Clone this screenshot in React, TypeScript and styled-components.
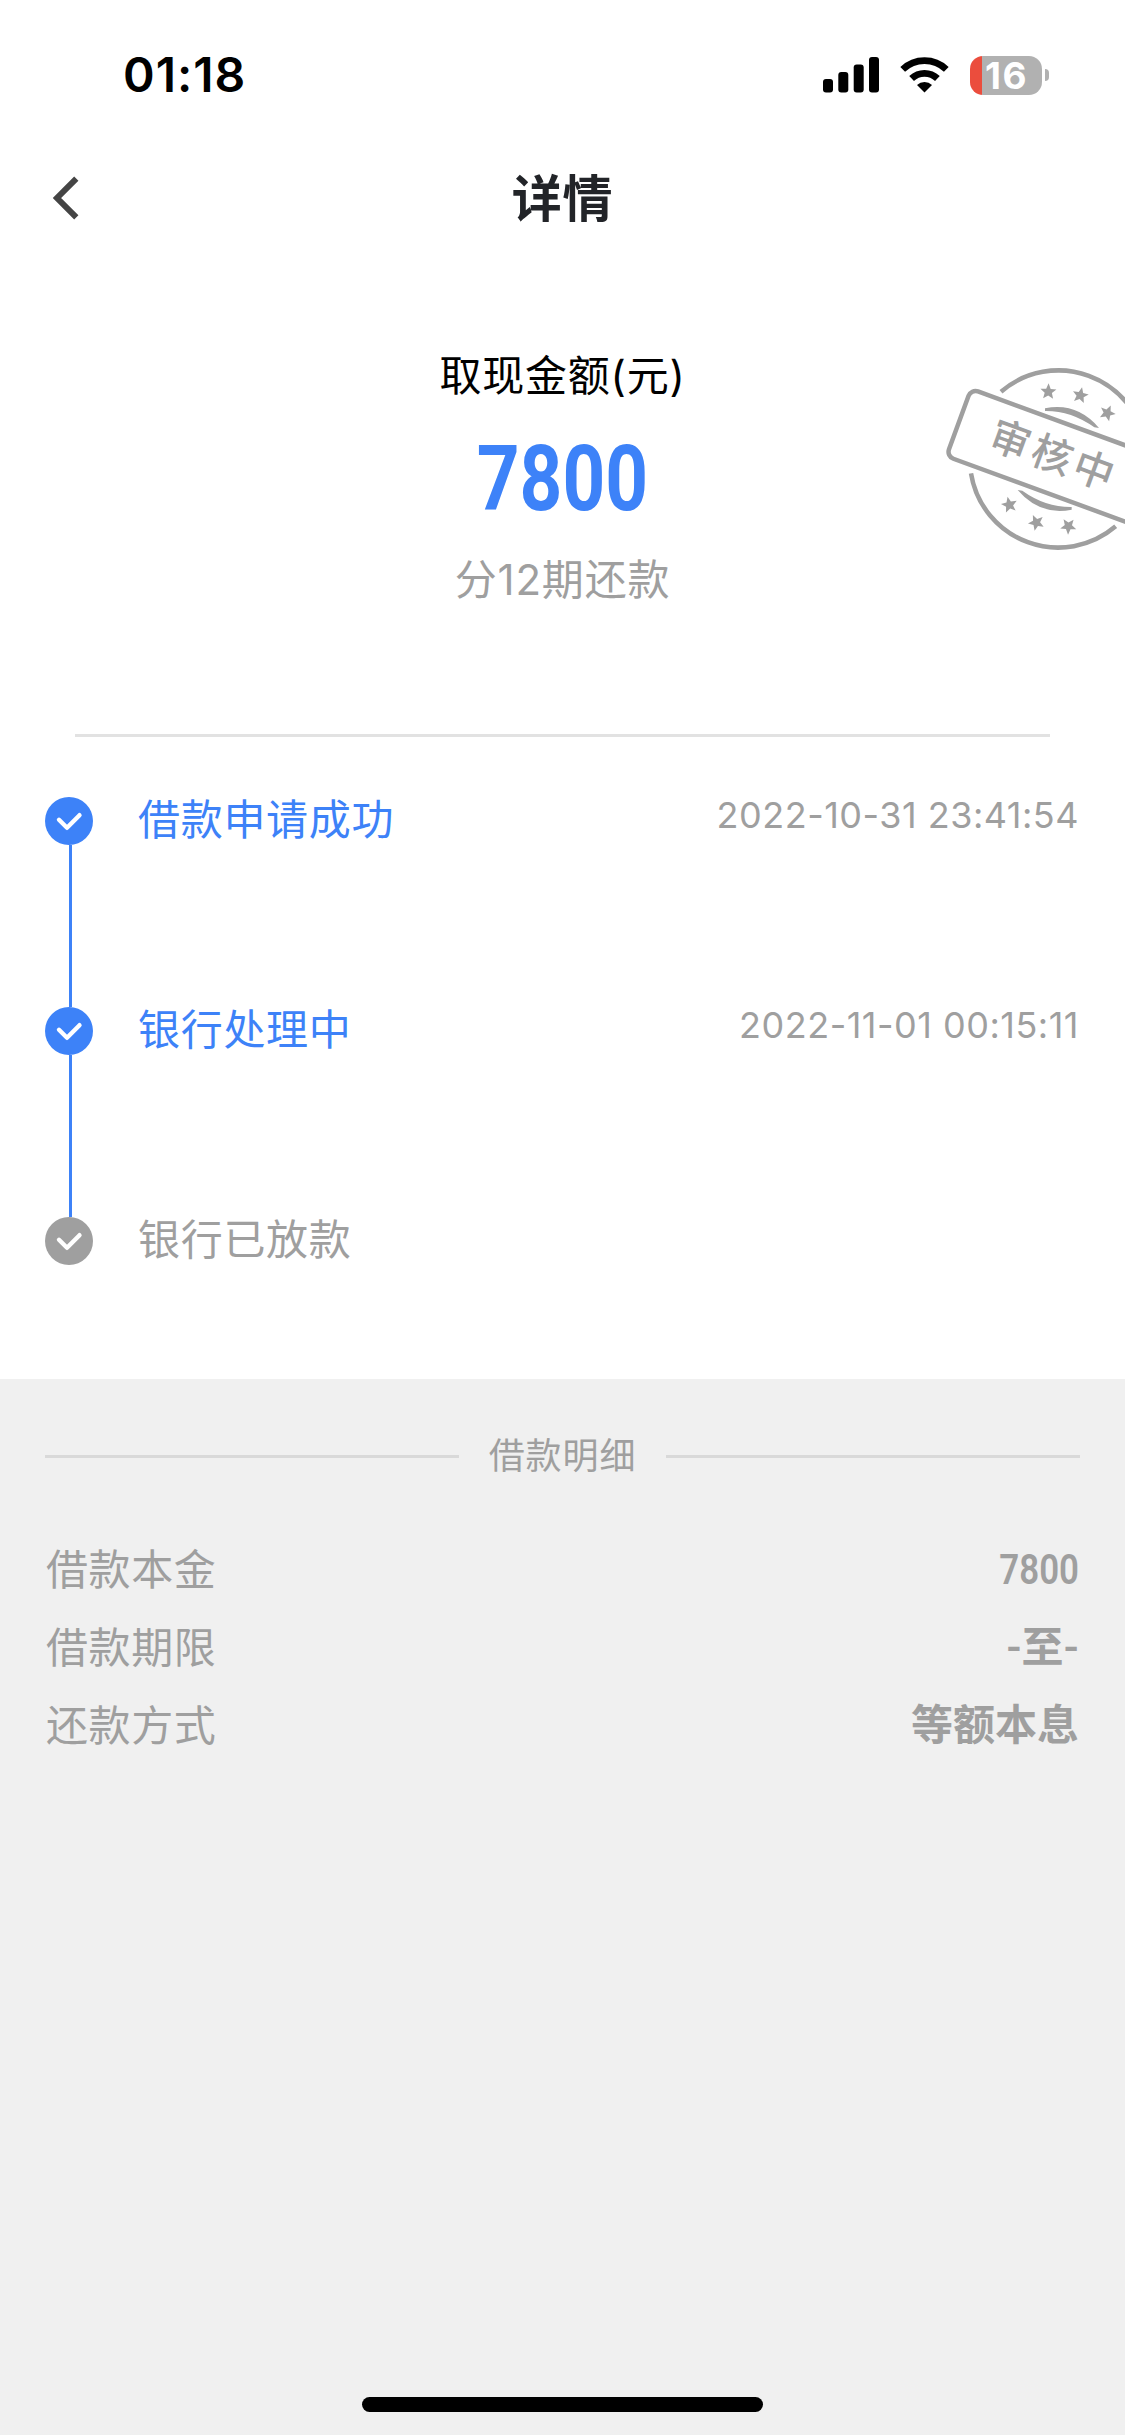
import React from "react";
import styled, { createGlobalStyle } from "styled-components";

const BLUE = "#3d82f8";
const GREY = "#9f9f9f";

const GlobalStyle = createGlobalStyle`
  * { box-sizing: border-box; }
  body {
    margin: 0;
    background: #f0f0f0;
    font-family: Inter, "Noto Sans CJK SC", sans-serif;
  }
`;

const Page = styled.div`
  display: flex;
  flex-direction: column;
  width: 1125px;
  height: 2435px;
  overflow: hidden;
  background: #f0f0f0;
`;

const Sheet = styled.main`
  display: flex;
  flex-direction: column;
  height: 1379px;
  flex: none;
  background: #fff;

  > * {
    flex: none;
  }
`;

const StatusBar = styled.header`
  display: flex;
  align-items: center;
  justify-content: space-between;
  height: 150px;
  padding: 0 76px 0 123px;
`;

const Clock = styled.time`
  font-size: 48px;
  font-weight: 600;
  line-height: 60px;
  letter-spacing: 1px;
  color: #000;
`;

const StatusIcons = styled.div`
  display: flex;
  align-items: center;
  gap: 21px;
`;

const Battery = styled.div`
  display: flex;
  align-items: center;
  gap: 3px;
`;

const BatteryBody = styled.div`
  display: flex;
  align-items: center;
  justify-content: center;
  width: 72px;
  height: 39px;
  padding-left: 1px;
  border-radius: 13px;
  background: linear-gradient(90deg, #eb4d3d 12px, #b1b1b1 12px);
  color: #fff;
  font-size: 37px;
  font-weight: 700;
  line-height: 39px;
  letter-spacing: 1.5px;
`;

const BatteryCap = styled.div`
  width: 4px;
  height: 12px;
  border-radius: 0 4px 4px 0;
  background: #b1b1b1;
`;

const NavBar = styled.nav`
  display: grid;
  grid-template-columns: 100px 1fr 100px;
  align-items: center;
  height: 96px;
`;

const BackButton = styled.button`
  display: flex;
  padding: 0 0 0 52px;
  border: 0;
  background: none;
`;

const Title = styled.h1`
  margin: 0;
  padding-top: 2px;
  text-align: center;
  font-size: 50px;
  font-weight: 600;
  line-height: 72px;
  letter-spacing: 0.8px;
  color: #222428;
`;

const Summary = styled.section`
  display: flex;
  flex-direction: column;
  align-items: center;
  position: relative;
  height: 488px;
  padding-top: 100px;
`;

const Caption = styled.div<{ $color: string }>`
  font-size: 42px;
  line-height: 60px;
  letter-spacing: 0.8px;
  color: ${(p) => p.$color};
`;

const Amount = styled.div`
  margin: 23px 0 21px;
  font-family: Roboto, sans-serif;
  font-size: 91px;
  font-weight: 700;
  line-height: 100px;
  transform: scaleX(0.82);
  color: ${BLUE};
`;

const Stamp = styled.svg`
  position: absolute;
  top: 94px;
  right: 0;
`;

const Divider = styled.hr`
  width: 975px;
  height: 3px;
  margin: 0 auto;
  border: 0;
  background: #e2e2e2;
`;

const Timeline = styled.ol`
  display: flex;
  flex-direction: column;
  margin: 0;
  padding: 60px 46px 0 45px;
  list-style: none;
`;

const Step = styled.li`
  display: grid;
  grid-template-columns: 48px 1fr auto;
  column-gap: 45px;
  height: 210px;

  &:last-child {
    height: 48px;
  }
`;

const Rail = styled.div`
  display: flex;
  flex-direction: column;
  align-items: center;
`;

const Connector = styled.div`
  width: 3px;
  flex: 1;
  margin-left: 3px;
  background: ${BLUE};
`;

const StepName = styled.div<{ $color: string }>`
  font-size: 42px;
  line-height: 46px;
  letter-spacing: 0.7px;
  color: ${(p) => p.$color};
`;

const StepTime = styled.time`
  font-size: 36px;
  line-height: 36px;
  letter-spacing: 0.5px;
  color: ${GREY};
`;

const Details = styled.section`
  display: flex;
  flex-direction: column;
  flex: 1;
  padding: 47px 45px 0;
  color: ${GREY};
`;

const DetailsHeading = styled.h2`
  display: flex;
  align-items: center;
  gap: 30px;
  margin: 0 0 45px;
  font-size: 36px;
  font-weight: 400;
  line-height: 60px;
  letter-spacing: 0.9px;

  &::before,
  &::after {
    content: "";
    flex: 1;
    height: 3px;
    background: #d9d9d9;
  }
`;

const DetailRow = styled.div`
  display: flex;
  align-items: center;
  justify-content: space-between;
  height: 78px;
  padding: 0 1px;
  font-size: 42px;
  line-height: 78px;
`;

const DetailLabel = styled.span`
  letter-spacing: 0.6px;
`;

const DetailValue = styled.span`
  font-family: Roboto, "Noto Sans CJK SC", sans-serif;
  font-weight: 600;
`;

const DetailNumber = styled.span`
  font-family: Roboto, sans-serif;
  font-weight: 600;
  transform: scaleX(0.83);
  transform-origin: right center;
`;

const HomeIndicator = styled.footer`
  width: 401px;
  height: 15px;
  margin: 0 auto 23px;
  border-radius: 8px;
  background: #000;
`;

const SignalIcon = () => (
  <svg width="56" height="36" viewBox="0 0 56 36">
    <rect x="0" y="22" width="10" height="13.5" rx="3" />
    <rect x="15.3" y="15" width="10" height="20.5" rx="3" />
    <rect x="30.7" y="7.5" width="10" height="28" rx="3" />
    <rect x="46" y="0" width="10" height="35.5" rx="3" />
  </svg>
);

const WifiIcon = () => (
  <svg width="49" height="36" viewBox="0 0 49 36">
    <path d="M24.5 35.5 L17 28 A10.8 10.8 0 0 1 32 28 Z" />
    <path d="M11.6 21.5 A18.6 18.6 0 0 1 37.4 21.5" fill="none" stroke="#000" strokeWidth="6.8" />
    <path d="M2.7 12.4 A31.5 31.5 0 0 1 46.3 12.4" fill="none" stroke="#000" strokeWidth="6.8" />
  </svg>
);

const BackIcon = () => (
  <svg width="28" height="44" viewBox="0 0 28 44">
    <path d="M24.3 2.7 L5 22 L24.3 41.3" fill="none" stroke="#444" strokeWidth="6" />
  </svg>
);

const CheckIcon = ({ color }: { color: string }) => (
  <svg width="48" height="48" viewBox="0 0 48 48">
    <circle cx="24" cy="24" r="24" fill={color} />
    <path
      d="M14 22.8 L22 30.8 L34.5 18.2"
      fill="none"
      stroke="#fff"
      strokeWidth="4.4"
      strokeLinecap="round"
      strokeLinejoin="round"
    />
  </svg>
);

const STAR = "M0-25 L6.8-8.6 L24-7.7 L10.8 3.4 L15 20.6 L0 11.4 L-15 20.6 L-10.8 3.4 L-24-7.7 L-6.8-8.6Z";

const StampHalf = () => (
  <>
    <path d="M258 155 A265 265 0 0 1 692 314" fill="none" stroke={GREY} strokeWidth="13.5" />
    <path d="M390 205 Q486 186 552 264 L538 262 Q468 212 390 213Z" fill={GREY} />
    <path d={STAR} transform="translate(400 155) rotate(2)" fill={GREY} />
    <path d={STAR} transform="translate(496 166) rotate(12)" fill={GREY} />
    <path d={STAR} transform="translate(577 219) rotate(24)" fill={GREY} />
  </>
);

const ReviewStamp = () => (
  <Stamp width="210" height="230" viewBox="0 0 630 690">
    <StampHalf />
    <g transform="rotate(180 430 357)">
      <StampHalf />
    </g>
    <g transform="rotate(20.1 430 357)">
      <rect x="112" y="249.5" width="636" height="215" rx="22" fill="#fff" stroke={GREY} strokeWidth="13.5" />
      <text x="215" y="396" fontSize="121" fontWeight="500" letterSpacing="12" fill={GREY}>
        审核中
      </text>
    </g>
  </Stamp>
);

const steps = [
  { name: "借款申请成功", time: "2022-10-31 23:41:54", done: true },
  { name: "银行处理中", time: "2022-11-01 00:15:11", done: true },
  { name: "银行已放款", time: "", done: false },
];

export default function App() {
  return (
    <Page>
      <GlobalStyle />
      <Sheet>
        <StatusBar>
          <Clock>01:18</Clock>
          <StatusIcons>
            <SignalIcon />
            <WifiIcon />
            <Battery>
              <BatteryBody>16</BatteryBody>
              <BatteryCap />
            </Battery>
          </StatusIcons>
        </StatusBar>
        <NavBar>
          <BackButton aria-label="返回">
            <BackIcon />
          </BackButton>
          <Title>详情</Title>
        </NavBar>
        <Summary>
          <Caption $color="#000">取现金额(元)</Caption>
          <Amount>7800</Amount>
          <Caption $color={GREY}>分12期还款</Caption>
          <ReviewStamp />
        </Summary>
        <Divider />
        <Timeline>
          {steps.map((step, i) => (
            <Step key={step.name}>
              <Rail>
                <CheckIcon color={step.done ? BLUE : GREY} />
                {i < steps.length - 1 && <Connector />}
              </Rail>
              <StepName $color={step.done ? BLUE : GREY}>{step.name}</StepName>
              {step.time && <StepTime>{step.time}</StepTime>}
            </Step>
          ))}
        </Timeline>
      </Sheet>
      <Details>
        <DetailsHeading>借款明细</DetailsHeading>
        <DetailRow>
          <DetailLabel>借款本金</DetailLabel>
          <DetailNumber>7800</DetailNumber>
        </DetailRow>
        <DetailRow>
          <DetailLabel>借款期限</DetailLabel>
          <DetailValue>-至-</DetailValue>
        </DetailRow>
        <DetailRow>
          <DetailLabel>还款方式</DetailLabel>
          <DetailValue>等额本息</DetailValue>
        </DetailRow>
      </Details>
      <HomeIndicator />
    </Page>
  );
}
